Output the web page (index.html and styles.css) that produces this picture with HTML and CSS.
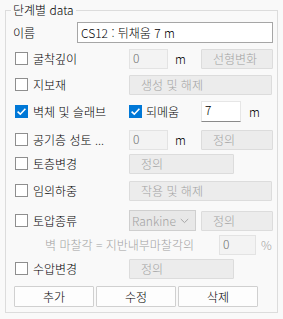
FILE: index.html
```html
<!DOCTYPE html>
<html lang="ko">
<head>
<meta charset="utf-8">
<title>단계별 data</title>
<link rel="stylesheet" href="styles.css">
</head>
<body>
<fieldset class="group">
  <legend class="legend">단계별 data</legend>
  <div class="rows">
    <div class="row">
      <span class="name-lbl">이름</span>
      <input class="tb tb-name" value="CS12 : 뒤채움 7 m">
    </div>
    <div class="row">
      <label class="lead"><span class="cb"></span><span class="lbl">굴착깊이</span></label>
      <input class="tb tb-dis w39" value="0" disabled>
      <span class="unit">m</span>
      <button class="btn btn-dis w72">선형변화</button>
    </div>
    <div class="row">
      <label class="lead"><span class="cb"></span><span class="lbl">지보재</span></label>
      <button class="btn btn-dis w143">생성 및 해제</button>
    </div>
    <div class="row">
      <label class="lead"><span class="cb cb-on"><svg viewBox="0 0 13 13" width="13" height="13"><path d="M2.6 6.6 L5.3 9.2 L10.4 3.8" fill="none" stroke="#fff" stroke-width="1.6"/></svg></span><span class="lbl">벽체 및 슬래브</span></label>
      <label class="lead2"><span class="cb cb-on"><svg viewBox="0 0 13 13" width="13" height="13"><path d="M2.6 6.6 L5.3 9.2 L10.4 3.8" fill="none" stroke="#fff" stroke-width="1.6"/></svg></span><span class="lbl">되메움</span></label>
      <input class="tb tb-edit w40" value="7">
      <span class="unit unit2">m</span>
    </div>
    <div class="row">
      <label class="lead"><span class="cb"></span><span class="lbl">공기층 성토 ...</span></label>
      <input class="tb tb-dis w39" value="0" disabled>
      <span class="unit">m</span>
      <button class="btn btn-dis w72">정의</button>
    </div>
    <div class="row">
      <label class="lead"><span class="cb"></span><span class="lbl">토층변경</span></label>
      <button class="btn btn-dis w105">정의</button>
    </div>
    <div class="row">
      <label class="lead"><span class="cb"></span><span class="lbl">임의하중</span></label>
      <button class="btn btn-dis w143">작용 및 해제</button>
    </div>
    <div class="row">
      <label class="lead"><span class="cb"></span><span class="lbl">토압종류</span></label>
      <div class="select">
        <span>Rankine</span>
        <svg class="chev" viewBox="0 0 9 6" width="9" height="6"><path d="M0.8 1 L4.5 4.6 L8.2 1" fill="none" stroke="#a6a6a6" stroke-width="1"/></svg>
      </div>
      <button class="btn btn-dis w72">정의</button>
    </div>
    <div class="row">
      <span class="note">벽 마찰각 = 지반내부마찰각의</span>
      <input class="tb tb-dis w37" value="0" disabled>
      <span class="pct">%</span>
    </div>
    <div class="row">
      <label class="lead"><span class="cb"></span><span class="lbl">수압변경</span></label>
      <button class="btn btn-dis w105">정의</button>
    </div>
    <div class="row actions">
      <button class="btn btn-act">추가</button>
      <button class="btn btn-act">수정</button>
      <button class="btn btn-act">삭제</button>
    </div>
  </div>
</fieldset>
</body>
</html>
```
FILE: styles.css
```css
html, body {
  margin: 0;
  padding: 0;
  background: #f9f9f9;
}
body {
  font-family: "Noto Sans CJK KR", "Noto Sans", sans-serif;
  font-size: 12px;
  font-weight: 300;
  line-height: 14px;
  color: #000;
  width: 283px;
  height: 319px;
  overflow: hidden;
}
.group {
  margin: 3px 5px 0 5px;
  padding: 5px 5px 5px 7px;
  border: 1px solid #dcdcdc;
  min-width: 0;
}
.legend {
  padding: 0 2px;
  margin-left: -2px;
  line-height: 14px;
  color: #000;
}
.rows {
  display: grid;
  grid-template-rows: 26px 26px 27px 28px 24px 27px 30px 24px 24px 28px 21px;
}
.row {
  display: flex;
  align-items: center;
  height: 21px;
}
.name-lbl {
  width: 64px;
}
.lead {
  width: 116px;
  box-sizing: border-box;
  padding-left: 2px;
  display: flex;
  align-items: center;
  gap: 5px;
  white-space: nowrap;
}
.lead2 {
  width: 72px;
  box-sizing: border-box;
  display: flex;
  align-items: center;
  gap: 4px;
}
.cb {
  width: 13px;
  height: 13px;
  box-sizing: border-box;
  border: 1px solid #8e8e8e;
  background: #fff;
  flex: none;
  display: block;
}
.cb-on {
  border: none;
  background: #0078d7;
}
.cb svg {
  display: block;
}
.tb {
  box-sizing: border-box;
  height: 21px;
  margin: 0;
  font: inherit;
  outline: none;
}
.tb-name {
  width: 196px;
  border: 1px solid #a6a6a6;
  background: #fff;
  padding: 0 0 0 3px;
  color: #000;
}
.tb-dis {
  height: 20px;
  border: 1px solid #e3e3e3;
  background: #f3f3f3;
  padding: 0 0 2px 3px;
  color: #6d6d6d;
  -webkit-text-fill-color: #6d6d6d;
  opacity: 1;
}
.tb-edit {
  border: 1px solid #e6e6e6;
  border-bottom-color: #8a8a8a;
  background: #fff;
  padding: 0 0 4px 3px;
  color: #000;
  height: 21px;
}
.w37 { width: 37px; }
.w39 { width: 39px; }
.w40 { width: 40px; }
.w72 { width: 72px; }
.w105 { width: 105px; }
.w143 { width: 143px; }
.unit {
  width: 33px;
  box-sizing: border-box;
  padding-left: 7px;
}
.unit2 {
  padding-left: 8px;
}
.btn {
  box-sizing: border-box;
  height: 20px;
  margin: 0;
  padding: 0;
  font: inherit;
  border-radius: 1px;
}
.btn-dis {
  background: #ececec;
  border: 1px solid #dcdcdc;
  color: #a2a2a2;
  height: 20px;
  text-align: left;
  padding-left: 11px;
}
.btn-act {
  width: 80px;
  height: 21px;
  background: #fdfdfd;
  border: 1px solid #d0d0d0;
  color: #000;
}
.actions {
  padding-left: 1px;
  gap: 2px;
}
.select {
  width: 67px;
  height: 21px;
  box-sizing: border-box;
  margin-right: 5px;
  border: 1px solid #cfcfcf;
  background: #e8e8e8;
  color: #a2a2a2;
  display: flex;
  align-items: center;
  padding-left: 2px;
  gap: 4px;
}
.chev {
  display: block;
}
.note {
  margin-left: 32px;
  width: 174px;
  color: #a2a2a2;
  white-space: nowrap;
}
.pct {
  padding-left: 5px;
  color: #a2a2a2;
}
```
